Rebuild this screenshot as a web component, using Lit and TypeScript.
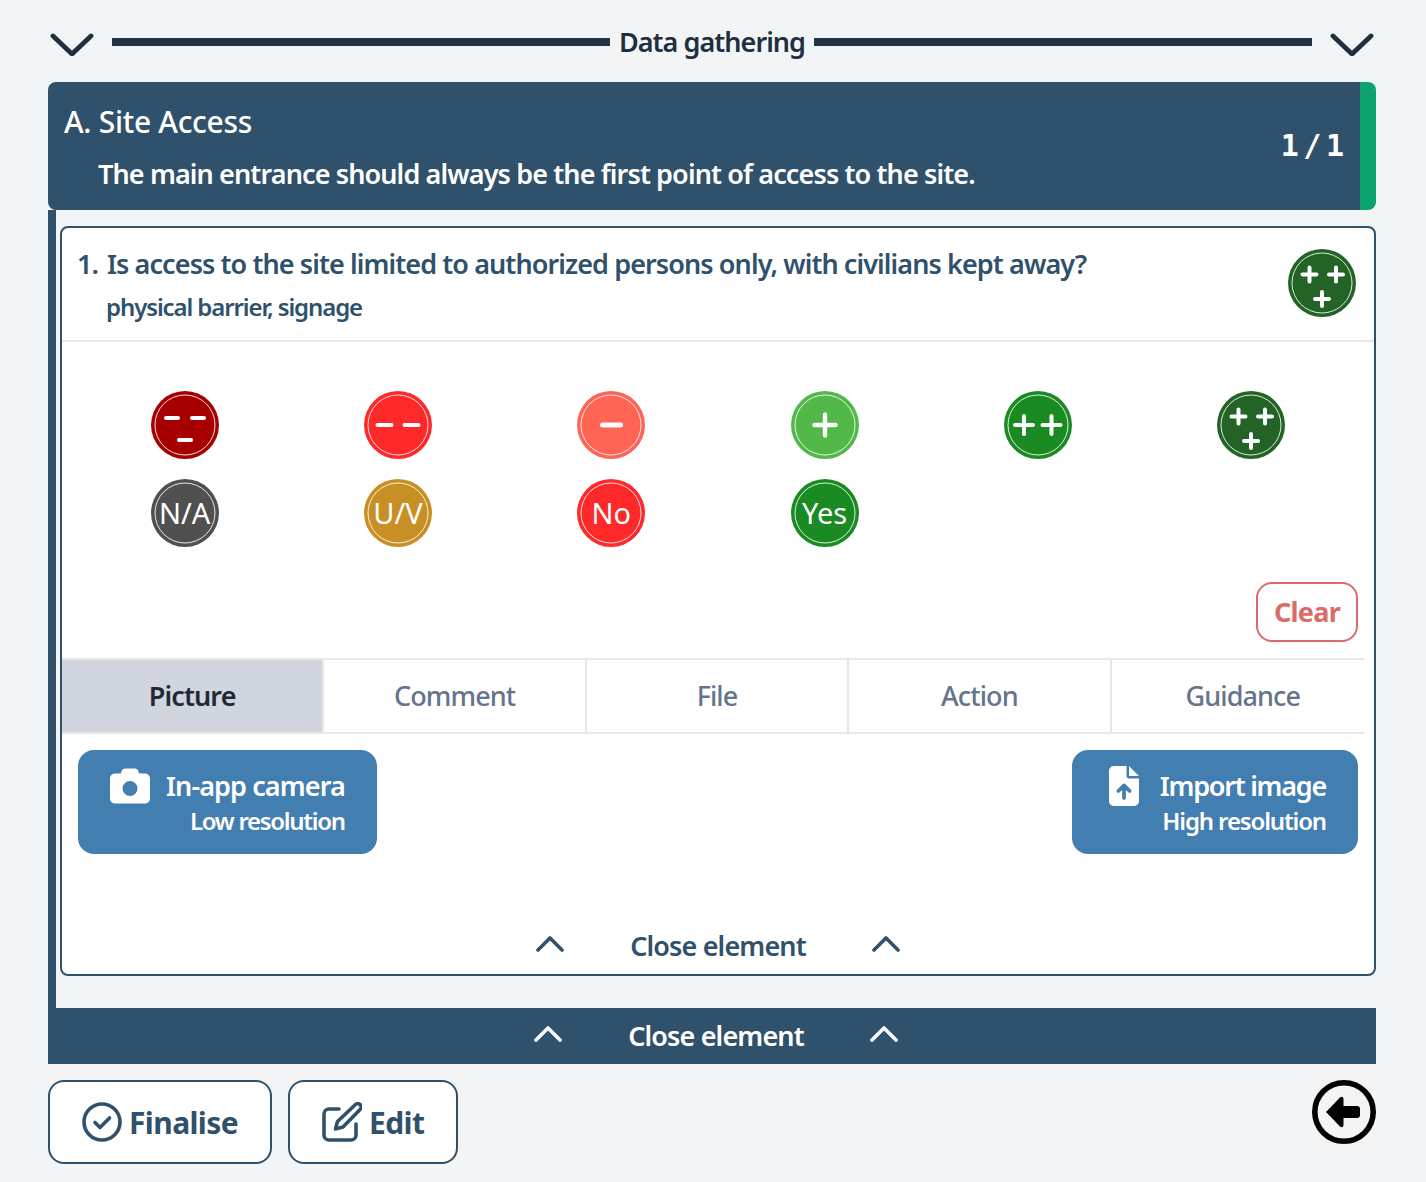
import { LitElement, html, css, svg } from 'lit';
import { customElement, property } from 'lit/decorators.js';

const plus = (x: number, y: number, r = 7) =>
  svg`<path d="M${x - r} ${y}H${x + r}M${x} ${y - r}V${y + r}" stroke="#fff" stroke-width="4" stroke-linecap="round" fill="none"/>`;
const dash = (x: number, y: number, r = 6) =>
  svg`<path d="M${x - r} ${y}H${x + r}" stroke="#fff" stroke-width="4" stroke-linecap="round" fill="none"/>`;

const marks: Record<string, unknown> = {
  '---': [dash(21, 27), dash(47, 27), dash(34, 49)],
  '--': [dash(20.5, 34, 7), dash(47.5, 34, 7)],
  '-': svg`<path d="M25.500 34H43.500" stroke="#fff" stroke-width="5" stroke-linecap="round"/>`,
  '+': svg`<path d="M23.500 34H44.500M34 23.500V44.500" stroke="#fff" stroke-width="4.400" stroke-linecap="round"/>`,
  '++': [plus(20, 34, 9), plus(47.5, 34, 9)],
  '+++': [plus(21.5, 25.5), plus(48, 25.5), plus(34, 50)],
};

@customElement('grade-badge')
class GradeBadge extends LitElement {
  @property() mark = '';
  @property() label = '';
  @property() color = '#000';

  static styles = css`
    :host {
      display: block;
      position: relative;
      width: 68px;
      height: 68px;
    }
    svg {
      display: block;
    }
    .label {
      position: absolute;
      inset: 0;
      display: flex;
      align-items: center;
      justify-content: center;
      color: #fff;
      font: 400 29px/68px 'Noto Sans', sans-serif;
    }
  `;

  render() {
    return html`
      <svg width="68" height="68" viewBox="0 0 68 68">
        <circle cx="34" cy="34" r="34" fill=${this.color}></circle>
        <circle cx="34" cy="34" r="30" fill="none" stroke="#fff" stroke-opacity=".85" stroke-width="1"></circle>
        ${marks[this.mark] ?? ''}
      </svg>
      ${this.label ? html`<span class="label">${this.label}</span>` : ''}
    `;
  }
}

const chevronDown = html`<svg class="chev" width="44" height="24" viewBox="0 0 44 24"><path d="M3 4L22 22L41 4" fill="none" stroke="#1f2f40" stroke-width="4.800" stroke-linecap="round" stroke-linejoin="round"/></svg>`;
const chevronUp = html`<svg width="28" height="16" viewBox="0 0 28 16"><path d="M2 14L14 2L26 14" fill="none" stroke="currentColor" stroke-width="3.600" stroke-linecap="round" stroke-linejoin="round"/></svg>`;

const grades = [
  { mark: '---', color: '#a60000' },
  { mark: '--', color: '#ff2929' },
  { mark: '-', color: '#ff6455' },
  { mark: '+', color: '#52b848' },
  { mark: '++', color: '#1a8a22' },
  { mark: '+++', color: '#236325' },
  { label: 'N/A', color: '#505050' },
  { label: 'U/V', color: '#c88f24' },
  { label: 'No', color: '#ff2929' },
  { label: 'Yes', color: '#1a8a22' },
];

const tabs = ['Picture', 'Comment', 'File', 'Action', 'Guidance'];

@customElement('app-root')
class AppRoot extends LitElement {
  static styles = css`
    :host {
      display: block;
      min-height: 1182px;
      box-sizing: border-box;
      padding: 24px 50px 18px 48px;
      background: #f3f4f6;
      font-family: 'Noto Sans', sans-serif;
      color: #30516b;
    }
    .top {
      display: flex;
      align-items: center;
      height: 40px;
      margin-bottom: 18px;
      color: #1f2f40;
    }
    .chev {
      flex: none;
      margin: 0 2px;
    }
    .top .rule {
      flex: 1;
      height: 8px;
      background: #1f3547;
      margin-top: -4px;
      margin-left: 16px;
    }
    .top .title {
      font-size: 27px;
      font-weight: 600;
      padding: 0 9px;
      margin-top: -4px;
      line-height: 36px;
      letter-spacing: -0.96px;
    }
    .top .rule.right {
      margin-left: 0;
      margin-right: 16px;
    }
    .section {
      display: flex;
      justify-content: space-between;
      height: 128px;
      box-sizing: border-box;
      border-radius: 8px;
      border-right: 16px solid #0ca36f;
      background: #30516b;
      color: #fff;
      padding: 22px 16px 0;
    }
    .section h2 {
      margin: 0;
      font-size: 30px;
      font-weight: 500;
      line-height: 36px;
      letter-spacing: -0.3px;
    }
    .section p {
      margin: 16px 0 0 34px;
      font-size: 27px;
      font-weight: 600;
      line-height: 36px;
      letter-spacing: -0.88px;
    }
    .count {
      font: 700 30px/36px 'DejaVu Sans Mono', monospace;
      word-spacing: -13.5px;
      margin-top: 24px;
    }
    .body {
      border-left: 8px solid #30516b;
      padding: 16px 0 32px 4px;
    }
    .card {
      background: #fff;
      border: 2px solid #30516b;
      border-radius: 8px;
    }
    .question {
      display: flex;
      justify-content: space-between;
      height: 114px;
      box-sizing: border-box;
      border-bottom: 2px solid #e5e7eb;
      padding: 16px 18px 0 16px;
    }
    .question .num {
      font-size: 27px;
      font-weight: 600;
      line-height: 40px;
      display: flex;
      gap: 8px;
      letter-spacing: -0.91px;
    }
    .question .num span:first-child {
      width: 21px;
      margin-left: -1px;
      margin-right: 1px;
    }
    .question small {
      display: block;
      font-size: 24px;
      font-weight: 600;
      line-height: 36px;
      margin: 5px 0 0 28px;
      letter-spacing: -1.1px;
    }
    .question grade-badge {
      margin-top: 5px;
    }
    .grades {
      display: grid;
      grid-template-columns: repeat(6, 1fr);
      row-gap: 20px;
      justify-items: center;
      padding: 49px 16px 0;
    }
    .clear-row {
      display: flex;
      justify-content: flex-end;
      padding: 35px 16px 16px;
    }
    .clear {
      width: 102px;
      height: 60px;
      box-sizing: border-box;
      border: 2px solid #db6b6b;
      border-radius: 16px;
      color: #db6b6b;
      background: #fff;
      font-size: 27px;
      font-weight: 700;
      text-align: center;
      line-height: 56px;
      letter-spacing: -0.7px;
    }
    /* the top and bottom rules stop 10px short of the card edge, the tabs do not */
    .tabs {
      display: grid;
      grid-template-columns: repeat(5, 1fr);
      padding: 2px 0;
      background:
        linear-gradient(#e5e7eb, #e5e7eb) left top / calc(100% - 10px) 2px no-repeat,
        linear-gradient(#e5e7eb, #e5e7eb) left bottom / calc(100% - 10px) 2px no-repeat;
    }
    .tab {
      height: 72px;
      line-height: 72px;
      text-align: center;
      font-size: 27px;
      font-weight: 500;
      color: #64748b;
      border-right: 2px solid #e5e7eb;
      letter-spacing: -0.9px;
    }
    .tab:last-child {
      border-right: 0;
    }
    .tab.active {
      background: #d1d5de;
      color: #1f2937;
      font-weight: 600;
    }
    .uploads {
      display: flex;
      justify-content: space-between;
      padding: 16px 16px 0;
    }
    .upload {
      display: flex;
      height: 104px;
      box-sizing: border-box;
      padding: 16px 32px 0;
      border-radius: 16px;
      background: #437eb0;
      color: #fff;
      gap: 16px;
    }
    .upload .lines {
      text-align: right;
    }
    .upload b {
      display: block;
      font-size: 27px;
      line-height: 40px;
      font-weight: 600;
      letter-spacing: -0.9px;
    }
    .upload span {
      display: block;
      font-size: 24px;
      line-height: 30px;
      font-weight: 600;
      letter-spacing: -1.3px;
    }
    .upload.wide {
      gap: 21px;
      padding-left: 37px;
    }
    .upload.wide b {
      letter-spacing: -1.25px;
    }
    .upload.wide span {
      letter-spacing: -1.15px;
    }
    .upload svg {
      fill: #fff;
      flex: none;
    }
    .closer {
      display: flex;
      justify-content: center;
      align-items: center;
      gap: 66px;
      height: 56px;
      box-sizing: border-box;
      padding-bottom: 2px;
      font-size: 27px;
      font-weight: 600;
      letter-spacing: -0.85px;
    }
    .closer svg {
      margin-bottom: 2px;
    }
    .card .closer {
      margin-top: 64px;
      color: #30516b;
    }
    .bar {
      padding-left: 8px;
      background: #30516b;
      color: #fff;
    }
    .actions {
      display: flex;
      align-items: flex-start;
      gap: 16px;
      margin-top: 16px;
    }
    .btn {
      display: flex;
      align-items: center;
      gap: 7px;
      height: 84px;
      box-sizing: border-box;
      padding: 0 32px;
      background: #fff;
      border: 2px solid #30516b;
      border-radius: 16px;
      font-size: 30px;
      font-weight: 700;
      letter-spacing: -0.6px;
    }
    .back {
      margin-left: auto;
    }
  `;

  render() {
    return html`
      <div class="top">
        ${chevronDown}
        <div class="rule"></div>
        <div class="title">Data gathering</div>
        <div class="rule right"></div>
        ${chevronDown}
      </div>

      <div class="section">
        <div>
          <h2>A. Site Access</h2>
          <p>The main entrance should always be the first point of access to the site.</p>
        </div>
        <div class="count">1 / 1</div>
      </div>

      <div class="body">
        <div class="card">
          <div class="question">
            <div>
              <div class="num"><span>1.</span><span>Is access to the site limited to authorized persons only, with civilians kept away?</span></div>
              <small>physical barrier, signage</small>
            </div>
            <grade-badge mark="+++" color="#236325"></grade-badge>
          </div>

          <div class="grades">
            ${grades.map(
              (g) => html`<grade-badge mark=${g.mark ?? ''} label=${g.label ?? ''} color=${g.color}></grade-badge>`
            )}
          </div>

          <div class="clear-row"><div class="clear">Clear</div></div>

          <div class="tabs">
            ${tabs.map((t, i) => html`<div class="tab ${i === 0 ? 'active' : ''}">${t}</div>`)}
          </div>

          <div class="uploads">
            <div class="upload">
              <svg width="40" height="40" viewBox="0 0 512 512"><path d="M149.1 64.8L138.7 96H64C28.7 96 0 124.7 0 160V416c0 35.3 28.7 64 64 64H448c35.3 0 64-28.7 64-64V160c0-35.3-28.7-64-64-64H373.3L362.9 64.8C356.4 45.2 338.1 32 317.4 32H194.6c-20.7 0-39 13.2-45.5 32.8zM256 192a96 96 0 1 1 0 192 96 96 0 1 1 0-192z"/></svg>
              <div class="lines"><b>In-app camera</b><span>Low resolution</span></div>
            </div>
            <div class="upload wide">
              <svg width="30" height="40" viewBox="0 0 384 512"><path d="M64 0C28.7 0 0 28.7 0 64V448c0 35.3 28.7 64 64 64H320c35.3 0 64-28.7 64-64V160H256c-17.7 0-32-14.3-32-32V0H64zM256 0V128H384L256 0zM216 408c0 13.3-10.7 24-24 24s-24-10.7-24-24V305.9l-31 31c-9.4 9.4-24.6 9.4-33.9 0s-9.4-24.6 0-33.9l72-72c9.4-9.4 24.6-9.4 33.9 0l72 72c9.4 9.4 9.4 24.6 0 33.9s-24.6 9.4-33.9 0l-31-31V408z"/></svg>
              <div class="lines"><b>Import image</b><span>High resolution</span></div>
            </div>
          </div>

          <div class="closer">${chevronUp}<span>Close element</span>${chevronUp}</div>
        </div>
      </div>

      <div class="closer bar">${chevronUp}<span>Close element</span>${chevronUp}</div>

      <div class="actions">
        <div class="btn">
          <svg width="40" height="40" viewBox="0 0 40 40" fill="none" stroke="#30516b" stroke-width="3.600" stroke-linecap="round" stroke-linejoin="round"><circle cx="20" cy="20" r="18"/><path d="M13 20.500L18 25.500L27.500 16"/></svg>
          Finalise
        </div>
        <div class="btn">
          <svg width="40" height="40" viewBox="0 0 40 40" fill="none" stroke="#30516b" stroke-width="3.600" stroke-linecap="round" stroke-linejoin="round"><path d="M17 7H7a5 5 0 0 0-5 5v21a5 5 0 0 0 5 5h22a5 5 0 0 0 5-5V22"/><path d="M33.500 2.500a3.400 3.400 0 0 1 4.800 4.800L21 25l-7.500 2L15.500 19.500z"/></svg>
          Edit
        </div>
        <svg class="back" width="64" height="64" viewBox="0 0 64 64"><circle cx="32" cy="32" r="29.200" fill="none" stroke="#000" stroke-width="5.600"/><path d="M14 32L28 17.500A2 2 0 0 1 31.500 19V26H45A3 3 0 0 1 48 29V35A3 3 0 0 1 45 38H31.500V45A2 2 0 0 1 28 46.500Z" fill="#000"/></svg>
      </div>
    `;
  }
}
